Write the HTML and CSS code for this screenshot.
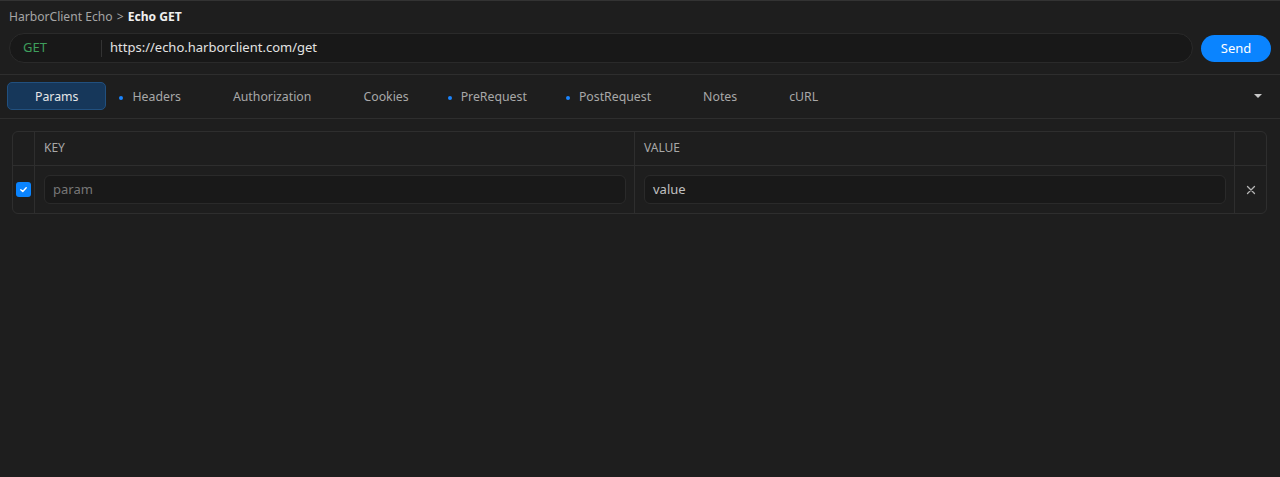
FILE: index.html
```html
<!DOCTYPE html>
<html lang="en">
<head>
    <meta charset="UTF-8">
    <meta name="viewport" content="width=device-width, initial-scale=1.0">
    <title>Echo GET</title>
    <link rel="stylesheet" href="styles.css">
</head>
<body>
    <header class="request-head">
        <div class="crumbs">
            <span class="crumb-parent">HarborClient Echo</span>
            <span class="crumb-sep">&gt;</span>
            <span class="crumb-current">Echo GET</span>
        </div>
        <div class="url-row">
            <div class="url-bar">
                <span class="method">GET</span>
                <span class="url-divider"></span>
                <span class="url-text">https://echo.harborclient.com/get</span>
            </div>
            <button class="send-button">Send</button>
        </div>
    </header>

    <nav class="tabs">
        <div class="tab active">Params</div>
        <div class="tab has-dot">Headers</div>
        <div class="tab">Authorization</div>
        <div class="tab">Cookies</div>
        <div class="tab has-dot">PreRequest</div>
        <div class="tab has-dot">PostRequest</div>
        <div class="tab">Notes</div>
        <div class="tab">cURL</div>
        <span class="tabs-more"></span>
    </nav>

    <section class="params-table">
        <div class="cell head"></div>
        <div class="cell head label">KEY</div>
        <div class="cell head label">VALUE</div>
        <div class="cell head last"></div>

        <div class="cell row check-cell">
            <span class="checkbox">
                <svg width="9" height="9" viewBox="0 0 10 10"><path d="M2 5.2 L4.2 7.2 L8 3" fill="none" stroke="#ffffff" stroke-width="1.6" stroke-linecap="round" stroke-linejoin="round"/></svg>
            </span>
        </div>
        <div class="cell row"><div class="field placeholder">param</div></div>
        <div class="cell row"><div class="field">value</div></div>
        <div class="cell row last remove">
            <svg width="10" height="10" viewBox="0 0 10 10"><path d="M1.5 1.5 L8.5 8.5 M8.5 1.5 L1.5 8.5" stroke="#b5b5b5" stroke-width="1.3" stroke-linecap="round"/></svg>
        </div>
    </section>
</body>
</html>
```

FILE: styles.css
```css
body {
    margin: 0;
    background-color: #1e1e1e;
    border-top: 1px solid #333333;
    font-family: "Noto Sans", "Open Sans", sans-serif;
    font-size: 13px;
    color: #d0d0d0;
    height: 476px;
}

.request-head {
    padding: 0 9px 11px 9px;
    border-bottom: 1px solid #2e2e2e;
}

.crumbs {
    height: 16px;
    line-height: 16px;
    padding-top: 8px;
    font-size: 12.1px;
}

.crumb-parent {
    color: #a5a5a5;
}

.crumb-sep {
    color: #a5a5a5;
    margin: 0 1px;
}

.crumb-current {
    color: #f0f0f0;
    font-weight: 700;
}

.url-row {
    display: flex;
    align-items: center;
    gap: 8px;
    margin-top: 8px;
}

.url-bar {
    flex: 1;
    height: 26px;
    padding-bottom: 2px;
    display: flex;
    align-items: center;
    background-color: #181818;
    border: 1px solid #2a2a2a;
    border-radius: 15px;
}

.method {
    width: 78px;
    padding-left: 13px;
    line-height: 26px;
    color: #3e9e5c;
    font-size: 13px;
}

.url-divider {
    width: 1px;
    height: 17px;
    margin-top: 2px;
    background-color: #333333;
}

.url-text {
    padding-left: 8px;
    line-height: 26px;
    color: #e2e2e2;
    font-size: 13px;
}

.send-button {
    width: 70px;
    height: 27px;
    border: none;
    border-radius: 14px;
    background-color: #0a84ff;
    color: #ffffff;
    font-family: inherit;
    font-size: 13px;
}

.tabs {
    display: flex;
    align-items: center;
    padding: 0 7px 1px 7px;
    box-sizing: border-box;
    height: 44px;
    border-bottom: 1px solid #2e2e2e;
    position: relative;
}

.tab {
    position: relative;
    height: 26px;
    line-height: 28px;
    padding: 0 25px;
    font-size: 12.3px;
    color: #a8a8a8;
    border: 1px solid transparent;
    border-radius: 5px;
}

.tab.active {
    padding: 0 27px;
    background-color: #16375a;
    border-color: #21507f;
    color: #e6e6e6;
}

.tab.has-dot::before {
    content: "";
    position: absolute;
    left: 12px;
    top: 13px;
    width: 4px;
    height: 4px;
    border-radius: 50%;
    background-color: #1a85ff;
}

.tabs-more {
    position: absolute;
    right: 18px;
    top: 19px;
    width: 0;
    height: 0;
    border-left: 4px solid transparent;
    border-right: 4px solid transparent;
    border-top: 4px solid #c8c8c8;
}

.params-table {
    display: grid;
    grid-template-columns: 22px 1fr 1fr 31px;
    margin: 12px 13px 0 12px;
    border: 1px solid #2e2e2e;
    border-radius: 6px;
}

.cell {
    border-right: 1px solid #2e2e2e;
}

.cell.last {
    border-right: none;
}

.cell.head {
    height: 33px;
    border-bottom: 1px solid #2e2e2e;
}

.cell.label {
    line-height: 31px;
    padding-left: 9px;
    font-size: 12px;
    color: #a8a8a8;
}

.cell.row {
    height: 47px;
    display: flex;
    align-items: center;
    padding: 0 8px 0 9px;
}

.check-cell {
    justify-content: center;
}

.cell.check-cell {
    padding: 0;
}

.checkbox {
    width: 15px;
    height: 15px;
    border-radius: 3px;
    background-color: #0a84ff;
    display: flex;
    align-items: center;
    justify-content: center;
}

.field {
    flex: 1;
    height: 27px;
    line-height: 26px;
    padding-left: 8px;
    background-color: #191919;
    border: 1px solid #2a2a2a;
    border-radius: 6px;
    color: #c0c0c0;
    font-size: 13px;
}

.field.placeholder {
    color: #777777;
}

.cell.remove {
    justify-content: center;
    padding: 0;
}
```
